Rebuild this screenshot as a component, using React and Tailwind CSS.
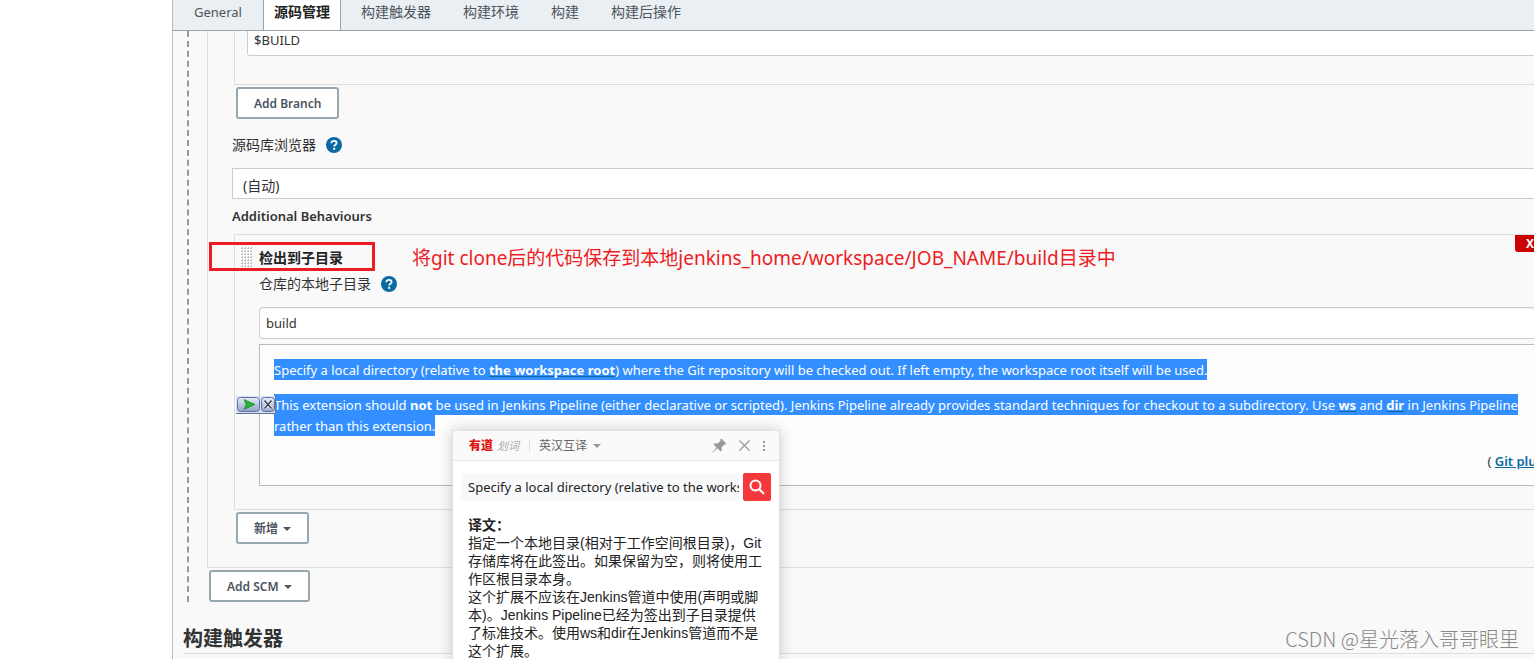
const tabs = ["General", "源码管理", "构建触发器", "构建环境", "构建", "构建后操作"];

const HelpIcon = () => (
  <button type="button" aria-label="Help" className="block h-4 w-4">
    <svg viewBox="0 0 16 16" className="h-4 w-4">
      <circle cx="8" cy="8" r="8" fill="#0b6aa2" />
      <path
        d="M5.4 6.2C5.4 4.7 6.5 3.8 8 3.8s2.6.9 2.6 2.2c0 1.8-2.4 1.8-2.4 3.6"
        fill="none"
        stroke="#fff"
        strokeWidth="1.8"
      />
      <rect x="7.2" y="10.8" width="2" height="2" fill="#fff" />
    </svg>
  </button>
);

const OutlineButton = ({ children, caret }) => (
  <button
    type="button"
    className="flex h-8 items-center gap-[5px] rounded-[3px] border-2 border-[#98a6b0] bg-white px-4 pt-[2px] text-[12px] font-semibold text-[#4d545d]"
  >
    {children}
    {caret && <Caret className="h-1 w-2 text-[#4d545d]" />}
  </button>
);

const Caret = ({ className }) => (
  <svg viewBox="0 0 8 4" className={className}>
    <path d="M0 0h8L4 4z" fill="currentColor" />
  </svg>
);

const Grip = () => (
  <svg width="12" height="20" viewBox="0 0 12 20">
    <defs>
      <pattern id="grip" width="3" height="3" patternUnits="userSpaceOnUse">
        <rect width="3" height="3" fill="#fff" />
        <rect x="1" y="1" width="2" height="1" fill="#bbb" />
        <rect x="2" y="0" width="1" height="1" fill="#bbb" />
      </pattern>
    </defs>
    <rect width="12" height="20" fill="url(#grip)" />
  </svg>
);

const TabBar = () => (
  <nav className="flex h-[31px] shrink-0 border-b border-[#98a6b0] bg-[#e9eff2] text-[14px] leading-6 text-[#4d545d]">
    {tabs.map((tab, i) => (
      <a
        key={tab}
        href="#"
        className={
          i === 1
            ? "border-x border-[#98a6b0] bg-white px-[10px] font-bold text-[#222]"
            : i === 0
              ? "w-[90px] pl-[21px] text-[13px]"
              : i === 2
                ? "pl-5 pr-4"
                : "px-4"
        }
      >
        {tab}
      </a>
    ))}
  </nav>
);

const HelpText = () => (
  <div className="mt-[5px] h-[142px] border border-[#bbb] bg-[#fdfdfd] pl-[14px] pt-[15px] text-[13px] leading-[21px] whitespace-nowrap text-white">
    <p>
      <span className="bg-[#338fff] pt-[2px] pb-px">
        Specify a local directory (relative to{" "}
        <a href="#" className="font-bold underline decoration-[#0b6aa2]">
          the workspace root
        </a>
        ) where the Git repository will be checked out. If left empty, the workspace root itself will be used.
      </span>
    </p>
    <p className="mt-[14px]">
      <span className="bg-[#338fff] pt-[2px] pb-px">
        This extension should <b>not</b> be used in Jenkins Pipeline (either declarative or scripted). Jenkins
        Pipeline already provides standard techniques for checkout to a subdirectory. Use{" "}
        <a href="#" className="font-bold underline decoration-[#0b6aa2]">
          ws
        </a>{" "}
        and{" "}
        <a href="#" className="font-bold underline decoration-[#0b6aa2]">
          dir
        </a>{" "}
        in Jenkins Pipeline
        <br />
        rather than this extension.
      </span>
    </p>
    <p className="mr-7 mt-[14px] text-right text-[#333]">
      ({" "}
      <a href="#" className="font-semibold text-[#0b6aa2] underline">
        Git plugin
      </a>{" "}
      )
    </p>
  </div>
);

const SubdirectoryBehaviour = () => (
  <section className="ml-[26px] mt-[7px] h-[276px] border border-[#ddd] pl-6">
    <div className="flex h-[38px] justify-between">
      <div className="-ml-[19px] flex items-start gap-[7px] pt-3">
        <Grip />
        <h3 className="text-[14px] font-bold leading-[22px] text-[#222]">检出到子目录</h3>
      </div>
      <button
        type="button"
        className="mr-12 h-[17px] w-[30px] rounded-b-[3px] bg-[#c00] text-[12px] font-bold leading-[17px] text-white"
      >
        X
      </button>
    </div>
    <div className="flex h-[22px] items-center gap-[10px]">
      <label htmlFor="subdir" className="text-[14px] leading-[22px]">
        仓库的本地子目录
      </label>
      <HelpIcon />
    </div>
    <input
      id="subdir"
      defaultValue="build"
      className="mt-3 block h-8 w-full rounded-[3px] border border-[#ccc] bg-white px-[6px] text-[13px] shadow-[inset_0_1px_1px_#0001]"
    />
    <HelpText />
  </section>
);

const ScmSection = () => (
  <div className="ml-[14px] border-l-2 border-dashed border-[#999] pl-[18px]">
    <div className="h-[537px] border-b border-l border-[#ddd]">
      <div className="ml-[26px] h-[54px] border-b border-l border-[#ddd] pl-3">
        <input
          aria-label="Branch"
          defaultValue="$BUILD"
          className="block h-[25px] w-full rounded-b-[3px] border border-t-0 border-[#ccc] bg-white px-[6px] pb-[6px] text-[13px]"
        />
      </div>
      <div className="ml-7 mt-[2px] flex">
        <OutlineButton>Add Branch</OutlineButton>
      </div>
      <div className="ml-6 mt-[15px] flex h-[22px] items-center gap-[10px]">
        <label htmlFor="browser" className="text-[14px] leading-[22px]">
          源码库浏览器
        </label>
        <HelpIcon />
      </div>
      <div className="ml-6 mt-3">
        <select
          id="browser"
          className="block h-[31px] w-full appearance-none border border-[#ccc] bg-white px-[10px] pt-[3px] text-[14px]"
        >
          <option>(自动)</option>
        </select>
        <h3 className="mt-[6px] text-[13px] font-semibold leading-[22px]">Additional Behaviours</h3>
      </div>
      <SubdirectoryBehaviour />
      <div className="ml-7 mt-[2px] flex">
        <OutlineButton caret>新增</OutlineButton>
      </div>
    </div>
    <div className="mt-[2px] flex pl-[2px]">
      <OutlineButton caret>Add SCM</OutlineButton>
    </div>
  </div>
);

const MiniPlayer = () => (
  <svg className="absolute left-[236px] top-[396px]" width="40" height="18" viewBox="0 0 40 18">
    <defs>
      <linearGradient id="steel" x1="0" y1="0" x2="0" y2="1">
        <stop offset="0" stopColor="#e6ecfa" />
        <stop offset="1" stopColor="#93a1cb" />
      </linearGradient>
    </defs>
    <rect width="40" height="18" fill="#d6e2f6" />
    <path d="M0 17.5h39.5V0" fill="none" stroke="#66708a" />
    <rect x="1.5" y="1.5" width="22" height="14" rx="3" fill="url(#steel)" stroke="#64719c" />
    <rect x="25.5" y="1.5" width="13" height="14" rx="3" fill="url(#steel)" stroke="#64719c" />
    <path d="M8 3.5l11 5-11 5 2-5z" fill="#1fb52c" stroke="#0f7d20" strokeWidth=".6" />
    <path d="M28.5 4.5l7 8m0-8l-7 8" stroke="#fff" strokeWidth="3.4" />
    <path d="M28.5 4.5l7 8m0-8l-7 8" stroke="#404a60" strokeWidth="1.8" />
  </svg>
);

const TranslatePopup = () => (
  <aside className="absolute left-[452px] top-[430px] w-[328px] border border-[#e0e0e0] bg-white shadow-[0_0_14px_#0003]">
    <header className="flex h-[30px] items-center border-b border-[#e4e4e4] bg-[#fafafa] pl-4 pr-[13px] text-[12px] leading-5">
      <span className="font-black text-[#e01414]">有道</span>
      <span className="ml-1 text-[11px] italic text-[#aaa]">划词</span>
      <span className="ml-[10px] h-3 border-l border-[#ddd]" />
      <button type="button" className="ml-[9px] flex items-center gap-[6px] text-[#666]">
        英汉互译
        <Caret className="h-1 w-2 text-[#999]" />
      </button>
      <div className="ml-auto flex items-center gap-3 text-[#999]">
        <button type="button" aria-label="Pin">
          <svg width="15" height="15" viewBox="0 0 15 15">
            <path
              d="M9.3.6l5.1 5.1-1.2 1-1-.2-2.6 2.7.2 3-1.3 1.2-3-3.1L.8 14.6l-.5-.4 4.2-4.8L1.6 6.5l1.2-1.3 3 .2L8.5 2.8l-.2-1.2z"
              fill="currentColor"
            />
          </svg>
        </button>
        <button type="button" aria-label="Close">
          <svg width="11" height="11" viewBox="0 0 11 11">
            <path d="M.5.5l10 10m0-10l-10 10" stroke="currentColor" strokeWidth="1.2" />
          </svg>
        </button>
        <button type="button" aria-label="More">
          <svg width="4" height="12" viewBox="0 0 4 12">
            <path d="M1 1h2v2H1zM1 5h2v2H1zM1 9h2v2H1z" fill="currentColor" />
          </svg>
        </button>
      </div>
    </header>
    <div className="mt-3 flex gap-1 px-2">
      <input
        aria-label="Text to translate"
        defaultValue="Specify a local directory (relative to the workspace root)"
        className="h-7 min-w-0 flex-1 bg-[#f7f9fb] pl-[7px] text-[13px] text-[#222]"
      />
      <button
        type="button"
        aria-label="Search"
        className="flex h-7 w-7 items-center justify-center rounded-[2px] bg-[#f5383b]"
      >
        <svg width="16" height="16" viewBox="0 0 16 16" fill="none" stroke="#fff" strokeWidth="2">
          <circle cx="6.5" cy="6.5" r="5" />
          <path d="M10 10l5 5" />
        </svg>
      </button>
    </div>
    <div className="px-[15px] pt-[15px] font-['Liberation_Sans','Noto_Sans_CJK_SC',sans-serif] text-[14px] leading-[18px] text-[#222]">
      <h4 className="font-bold">译文：</h4>
      <p>
        指定一个本地目录(相对于工作空间根目录)，Git
        <br />
        存储库将在此签出。如果保留为空，则将使用工
        <br />
        作区根目录本身。
      </p>
      <p>
        这个扩展不应该在Jenkins管道中使用(声明或脚
        <br />
        本)。Jenkins Pipeline已经为签出到子目录提供
        <br />
        了标准技术。使用ws和dir在Jenkins管道而不是
        <br />
        这个扩展。
      </p>
    </div>
  </aside>
);

const App = () => (
  <div className="relative h-screen overflow-hidden bg-white font-['Noto_Sans','Noto_Sans_CJK_SC',sans-serif] text-[#333]">
    <main className="ml-[172px] flex h-full flex-col border-l border-[#bbb] bg-[#f9f9f9]">
      <TabBar />
      <div className="-mr-[60px]">
        <ScmSection />
        <h2 className="ml-[10px] mt-[22px] border-b border-[#ddd] text-[20px] font-bold leading-[29px]">构建触发器</h2>
      </div>
    </main>

    {/* Annotation over the behaviour title */}
    <div className="absolute left-[209px] top-[242px] h-[29px] w-[166px] border-3 border-[#ed1c24]" />
    <p className="absolute left-[412px] top-[244px] text-[19px] leading-[28px] whitespace-nowrap text-[#ed1c24]">
      将git clone后的代码保存到本地jenkins_home/workspace/JOB_NAME/build目录中
    </p>

    <MiniPlayer />
    <TranslatePopup />
    <p className="absolute bottom-[6px] right-[15px] font-['Noto_Sans_CJK_SC',sans-serif] text-[20px] font-light leading-[28px] text-[#888]">
      CSDN @星光落入哥哥眼里
    </p>
  </div>
);

export default App;
